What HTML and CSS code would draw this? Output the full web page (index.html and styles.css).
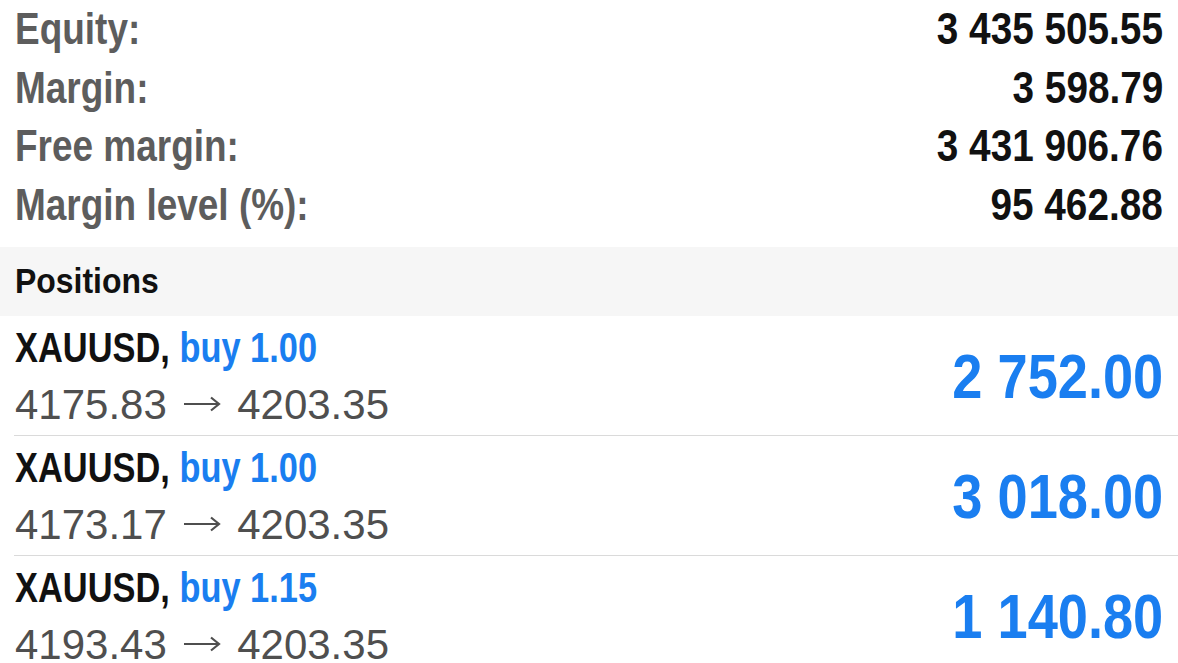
FILE: index.html
```html
<!DOCTYPE html>
<html lang="en">
<head>
    <meta charset="UTF-8">
    <meta name="viewport" content="width=device-width, initial-scale=1.0">
    <title>Trade</title>
    <link rel="stylesheet" href="styles.css">
</head>
<body>
    <!-- Resumen de la cuenta -->
    <div class="account">
        <div class="account-row">
            <span class="label cond">Equity:</span>
            <span class="value cond">3 435 505.55</span>
        </div>
        <div class="account-row">
            <span class="label cond">Margin:</span>
            <span class="value cond">3 598.79</span>
        </div>
        <div class="account-row">
            <span class="label cond">Free margin:</span>
            <span class="value cond">3 431 906.76</span>
        </div>
        <div class="account-row">
            <span class="label cond">Margin level (%):</span>
            <span class="value cond">95 462.88</span>
        </div>
    </div>

    <div class="section-header">
        <span class="cond">Positions</span>
    </div>

    <!-- Posiciones abiertas -->
    <div class="positions">
        <div class="position">
            <div class="position-info">
                <div class="position-title"><span class="cond">XAUUSD, <span class="buy">buy 1.00</span></span></div>
                <div class="position-prices">4175.83 <svg class="arrow" viewBox="0 0 38 20"><path d="M1 10H36M28 3.5L36 10L28 16.5"/></svg> 4203.35</div>
            </div>
            <div class="profit"><span class="cond">2 752.00</span></div>
        </div>
        <div class="position">
            <div class="position-info">
                <div class="position-title"><span class="cond">XAUUSD, <span class="buy">buy 1.00</span></span></div>
                <div class="position-prices">4173.17 <svg class="arrow" viewBox="0 0 38 20"><path d="M1 10H36M28 3.5L36 10L28 16.5"/></svg> 4203.35</div>
            </div>
            <div class="profit"><span class="cond">3 018.00</span></div>
        </div>
        <div class="position">
            <div class="position-info">
                <div class="position-title"><span class="cond">XAUUSD, <span class="buy">buy 1.15</span></span></div>
                <div class="position-prices">4193.43 <svg class="arrow" viewBox="0 0 38 20"><path d="M1 10H36M28 3.5L36 10L28 16.5"/></svg> 4203.35</div>
            </div>
            <div class="profit"><span class="cond">1 140.80</span></div>
        </div>
    </div>
</body>
</html>
```

FILE: styles.css
```css
:root {
    --blue: #1a7ef0;
    --label: #5d5d5d;
    --text: #111;
    --muted: #4f4f4f;
    --band: #f6f6f6;
    --line: #dadada;
}

* {
    margin: 0;
    padding: 0;
    box-sizing: border-box;
}

body {
    background-color: white;
    font-family: 'Liberation Sans', Arial, sans-serif;
    color: var(--text);
    overflow: hidden;
}

/* Texto estrecho (la app usa una fuente condensada) */
.cond {
    display: inline-block;
    transform: scaleX(0.84);
    transform-origin: left center;
    white-space: nowrap;
}

.account {
    padding: 0 15px 13px 15px;
}

.account-row {
    display: flex;
    justify-content: space-between;
    height: 58.5px;
    line-height: 58.5px;
    font-size: 44px;
    font-weight: bold;
}

.label {
    color: var(--label);
}

.value {
    color: var(--text);
    transform: scaleX(0.88);
    transform-origin: right center;
}

.section-header {
    background-color: var(--band);
    height: 69px;
    line-height: 69px;
    padding-left: 15px;
    font-size: 35.5px;
    font-weight: bold;
}

.section-header .cond {
    transform: scaleX(0.9);
}

.position {
    display: flex;
    justify-content: space-between;
    align-items: center;
    height: 120px;
    margin-left: 14px;
    padding: 0 15px 0 1px;
    border-bottom: 1px solid var(--line);
}

.position-title {
    font-size: 43px;
    font-weight: bold;
    line-height: 58px;
}

.position-title .cond {
    transform: scaleX(0.8);
}

.buy {
    color: var(--blue);
}

.position-prices {
    font-size: 42px;
    line-height: 58px;
    color: var(--muted);
    white-space: nowrap;
}

.arrow {
    width: 38px;
    height: 20px;
    margin: 0 5px 0 4px;
    vertical-align: 5px;
    fill: none;
    stroke: var(--muted);
    stroke-width: 2.2;
}

.profit {
    font-size: 63px;
    font-weight: bold;
    color: var(--blue);
}

.profit .cond {
    transform: scaleX(0.86);
    transform-origin: right center;
}
```
